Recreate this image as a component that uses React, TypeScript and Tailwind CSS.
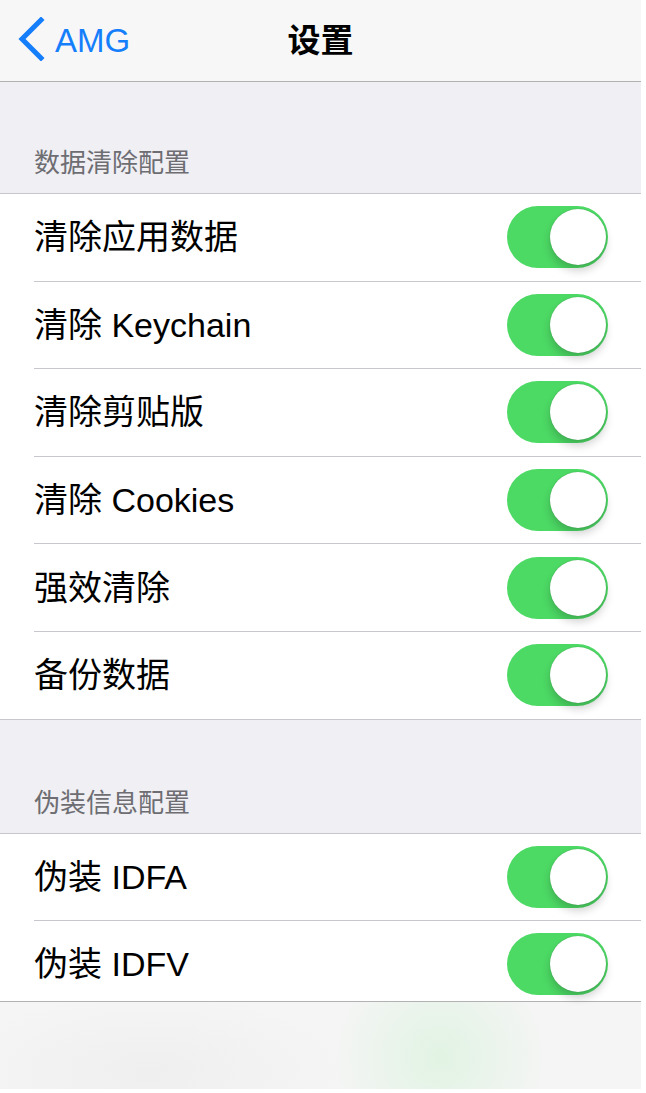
import { useState } from "react";

const font = {
  fontFamily: '"Liberation Sans", "Noto Sans CJK SC", sans-serif',
};

interface Item {
  label: string;
}

const clearItems: Item[] = [
  { label: "清除应用数据" },
  { label: "清除 Keychain" },
  { label: "清除剪贴版" },
  { label: "清除 Cookies" },
  { label: "强效清除" },
  { label: "备份数据" },
];

const fakeItems: Item[] = [{ label: "伪装 IDFA" }, { label: "伪装 IDFV" }];

function Toggle() {
  const [on, setOn] = useState(true);
  return (
    <button
      onClick={() => setOn(!on)}
      className={`relative h-[62px] w-[101px] shrink-0 rounded-full ${
        on ? "bg-[#4cd964]" : "bg-[#e5e5ea]"
      }`}
    >
      <span
        className={`absolute top-[3px] h-[56px] w-[56px] rounded-full bg-white shadow-[0_6px_8px_rgba(0,0,0,0.18),0_0_1px_rgba(0,0,0,0.3)] ${
          on ? "right-[2px]" : "left-[2px]"
        }`}
      />
    </button>
  );
}

function Section({
  title,
  items,
  cut,
}: {
  title: string;
  items: Item[];
  cut?: boolean;
}) {
  return (
    <div>
      <div
        className={`flex items-end px-[34px] pb-[14px] ${cut ? "h-[113px]" : "h-[111px]"}`}
      >
        <span className="text-[26px] leading-[32px] text-[#6d6d72]">{title}</span>
      </div>
      <div className={`border-t border-[#c8c7cc] bg-white ${cut ? "" : "border-b"}`}>
        {items.map((item, i) => {
          const last = i === items.length - 1;
          return (
            <div key={item.label} className="pl-[34px]">
              {last && cut ? (
                <div className="flex h-[80px] items-start pt-[12px] pr-[33px]">
                  <span className="flex-1 text-[34px] leading-[62px] text-black">
                    {item.label}
                  </span>
                  <Toggle />
                </div>
              ) : (
                <div
                  className={`flex items-center pr-[33px] ${
                    last ? "h-[86.6px]" : "h-[87.6px] border-b border-[#c8c7cc]"
                  }`}
                >
                  <span className="flex-1 text-[34px] leading-none text-black">
                    {item.label}
                  </span>
                  <Toggle />
                </div>
              )}
            </div>
          );
        })}
      </div>
    </div>
  );
}

export default function App() {
  return (
    <div className="min-h-[1093px] w-[646px] bg-white" style={font}>
      <div className="w-[641px] bg-[#efeff4]">
        <div className="flex h-[82px] items-center border-b border-[#b2b2b2] bg-[#f7f7f8]">
          <div className="flex w-[200px] items-center pl-[17px]">
            <svg width="28" height="44" viewBox="0 0 28 44" className="mt-[-3px]">
              <path
                d="M24 3 L5 22 L24 41"
                fill="none"
                stroke="#157efb"
                strokeWidth="5"
                strokeLinecap="square"
              />
            </svg>
            <span className="ml-[10px] text-[33px] leading-none text-[#157efb]">AMG</span>
          </div>
          <div className="flex-1 text-center text-[33px] font-bold leading-none text-black">
            设置
          </div>
          <div className="w-[200px]" />
        </div>
        <Section title="数据清除配置" items={clearItems} />
        <Section title="伪装信息配置" items={fakeItems} cut />
        <div className="h-[88px] border-t border-[#b2b2b2] bg-[#f5f5f5] bg-[radial-gradient(ellipse_110px_110px_at_440px_55px,#e1f3e3_0%,rgba(245,245,245,0)_100%),radial-gradient(ellipse_200px_80px_at_150px_70px,#efefef_0%,rgba(245,245,245,0)_100%)]" />
      </div>
    </div>
  );
}
